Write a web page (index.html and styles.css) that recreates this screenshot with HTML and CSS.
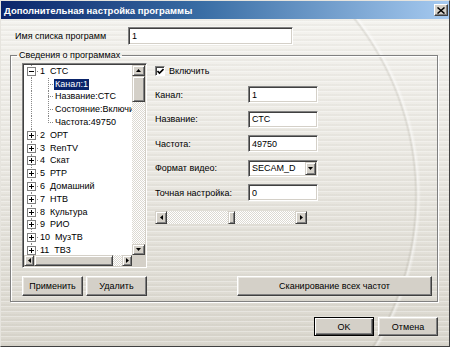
FILE: index.html
```html
<!DOCTYPE html>
<html lang="ru">
<head>
  <meta charset="UTF-8">
  <title>Дополнительная настройка программы</title>
  <link rel="stylesheet" href="styles.css">
</head>
<body>
  <div class="window">
    <div class="titlebar">
      <span class="title">Дополнительная настройка программы</span>
      <span class="close-btn">
        <svg width="8" height="7" viewBox="0 0 8 7"><path d="M0.5 0.5L7.5 6.5M7.5 0.5L0.5 6.5" stroke="#000" stroke-width="1.5"/></svg>
      </span>
    </div>

    <div class="content">
      <div class="name-row">
        <span class="name-label">Имя списка программ</span>
        <div class="field name-field">1</div>
      </div>

      <fieldset class="group">
        <legend>Сведения о программах</legend>
        <div class="group-body">

          <!-- channel tree -->
          <div class="tree">
            <div class="tree-rows">
              <div class="node"><span class="exp"><span class="box open"></span><span class="hline"></span></span><span class="txt">1  СТС</span></div>
              <div class="node"><span class="indent"></span><span class="conn"></span><span class="txt sel">Канал:1</span></div>
              <div class="node"><span class="indent"></span><span class="conn"></span><span class="txt">Название:СТС</span></div>
              <div class="node"><span class="indent"></span><span class="conn"></span><span class="txt">Состояние:Включить</span></div>
              <div class="node last"><span class="indent"></span><span class="conn"></span><span class="txt">Частота:49750</span></div>
              <div class="node"><span class="exp"><span class="box"></span><span class="hline"></span></span><span class="txt">2  ОРТ</span></div>
              <div class="node"><span class="exp"><span class="box"></span><span class="hline"></span></span><span class="txt">3  RenTV</span></div>
              <div class="node"><span class="exp"><span class="box"></span><span class="hline"></span></span><span class="txt">4  Скат</span></div>
              <div class="node"><span class="exp"><span class="box"></span><span class="hline"></span></span><span class="txt">5  РТР</span></div>
              <div class="node"><span class="exp"><span class="box"></span><span class="hline"></span></span><span class="txt">6  Домашний</span></div>
              <div class="node"><span class="exp"><span class="box"></span><span class="hline"></span></span><span class="txt">7  НТВ</span></div>
              <div class="node"><span class="exp"><span class="box"></span><span class="hline"></span></span><span class="txt">8  Культура</span></div>
              <div class="node"><span class="exp"><span class="box"></span><span class="hline"></span></span><span class="txt">9  РИО</span></div>
              <div class="node"><span class="exp"><span class="box"></span><span class="hline"></span></span><span class="txt">10  МузТВ</span></div>
              <div class="node"><span class="exp"><span class="box"></span><span class="hline"></span></span><span class="txt">11  ТВ3</span></div>
            </div>
            <div class="vscroll">
              <span class="sb-btn"><svg width="5" height="3" viewBox="0 0 5 3"><polygon points="0,3 2.5,0 5,3" fill="#000"/></svg></span>
              <span class="sb-btn v-thumb"></span>
              <span class="track"></span>
              <span class="sb-btn"><svg width="5" height="3" viewBox="0 0 5 3"><polygon points="0,0 2.5,3 5,0" fill="#000"/></svg></span>
            </div>
            <div class="hscroll">
              <span class="sb-btn"><svg width="3" height="5" viewBox="0 0 3 5"><polygon points="3,0 0,2.5 3,5" fill="#000"/></svg></span>
              <span class="sb-btn h-thumb"></span>
              <span class="track"></span>
              <span class="sb-btn"><svg width="3" height="5" viewBox="0 0 3 5"><polygon points="0,0 3,2.5 0,5" fill="#000"/></svg></span>
            </div>
            <div class="corner"></div>
          </div>

          <!-- channel settings -->
          <div class="form">
            <div class="check-row">
              <span class="checkbox"><svg width="7" height="7" viewBox="0 0 7 7"><polyline points="0.5,3 2.5,5 6.5,1" fill="none" stroke="#000" stroke-width="1.6"/></svg></span>
              <span>Включить</span>
            </div>
            <span class="lbl">Канал:</span><div class="field">1</div>
            <span class="lbl">Название:</span><div class="field">СТС</div>
            <span class="lbl">Частота:</span><div class="field">49750</div>
            <span class="lbl">Формат видео:</span>
            <div class="field combo">
              <span>SECAM_D</span>
              <span class="sb-btn combo-btn"><svg width="5" height="3" viewBox="0 0 5 3"><polygon points="0,0 2.5,3 5,0" fill="#000"/></svg></span>
            </div>
            <span class="lbl">Точная настройка:</span><div class="field">0</div>
            <div class="slider">
              <span class="sb-btn arrow"><svg width="3" height="5" viewBox="0 0 3 5"><polygon points="3,0 0,2.5 3,5" fill="#000"/></svg></span>
              <span class="track"></span>
              <span class="sb-btn s-thumb"></span>
              <span class="track"></span>
              <span class="sb-btn arrow"><svg width="3" height="5" viewBox="0 0 3 5"><polygon points="0,0 3,2.5 0,5" fill="#000"/></svg></span>
            </div>
          </div>

          <div class="left-buttons">
            <button class="btn">Применить</button>
            <button class="btn">Удалить</button>
          </div>
          <div class="right-buttons">
            <button class="btn scan-btn">Сканирование всех частот</button>
          </div>
        </div>
      </fieldset>

      <div class="footer">
        <button class="btn default-btn">OK</button>
        <button class="btn">Отмена</button>
      </div>
    </div>
  </div>
</body>
</html>
```

FILE: styles.css
```css
* {
  box-sizing: border-box;
}

body {
  margin: 0;
  font-family: "Liberation Sans", Arial, sans-serif;
  font-size: 9px;
  color: #000;
}

.window {
  width: 450px;
  height: 347px;
  display: flex;
  flex-direction: column;
  border: 1px solid;
  border-color: #e6e4de #404040 #404040 #e6e4de;
  background:
    radial-gradient(circle at 129px 195px, transparent 0 284px, rgba(140, 135, 120, 0.18) 286px, rgba(255, 255, 255, 0.5) 288px, transparent 291px),
    repeating-linear-gradient(180deg, rgba(255, 255, 255, 0.3) 0 1px, transparent 1px 3px, rgba(120, 115, 100, 0.05) 3px 5px),
    linear-gradient(180deg, #f5f4f0 0%, #ebe9e3 45%, #dad7ce 100%);
}

/* Title bar */
.titlebar {
  height: 18px;
  display: flex;
  align-items: center;
  justify-content: space-between;
  padding: 0 1px 0 3px;
  background: linear-gradient(90deg, #0a246a 0%, #3a6ea5 45%, #a6caf0 100%);
  color: #fff;
  font-weight: bold;
  font-size: 9.5px;
}

.close-btn {
  width: 14px;
  height: 12px;
  display: flex;
  align-items: center;
  justify-content: center;
  background: #d4d0c8;
  border: 1px solid;
  border-color: #fff #404040 #404040 #fff;
  box-shadow: inset -1px -1px #808080;
}

.content {
  flex: 1;
  padding: 8px 11px 0 9px;
}

/* Common controls */
.btn {
  font: inherit;
  color: #000;
  padding: 0;
  background: #d4d0c8;
  border: 1px solid;
  border-color: #fff #404040 #404040 #fff;
  box-shadow: inset -1px -1px #808080, inset 1px 1px #e8e6e0;
}

.default-btn {
  border-color: #000;
  box-shadow: inset 1px 1px #fff, inset -1px -1px #404040, inset -2px -2px #808080;
}

.field {
  height: 17px;
  display: flex;
  align-items: center;
  padding: 0 3px;
  background: #fff;
  border: 1px solid;
  border-color: #808080 #fff #fff #808080;
  box-shadow: inset 1px 1px #404040, inset -1px -1px #d4d0c8;
}

.sb-btn {
  flex: none;
  display: flex;
  align-items: center;
  justify-content: center;
  background: #d4d0c8;
  border: 1px solid;
  border-color: #d4d0c8 #404040 #404040 #d4d0c8;
  box-shadow: inset 1px 1px #fff, inset -1px -1px #808080;
}

.track {
  flex: 1;
  background: repeating-conic-gradient(#fff 0 25%, #dcd9d2 0 50%) 0 0 / 2px 2px;
}

/* Name row */
.name-row {
  display: flex;
  align-items: center;
  margin-left: 5px;
}

.name-label {
  width: 113px;
}

.name-field {
  width: 165px;
  height: 18px;
}

/* Group box */
.group {
  margin: 4px 0 0;
  padding: 2px 5px 5px 11px;
  border: 1px solid #808080;
  box-shadow: 1px 1px #fff, inset 1px 1px #fff;
}

.group legend {
  margin-left: -5px;
  padding: 0 2px;
  line-height: 12px;
}

.group-body {
  display: grid;
  grid-template-columns: 125px 1fr;
  grid-template-rows: 205px 20px;
  column-gap: 8px;
  row-gap: 8px;
}

/* Tree */
.tree {
  display: grid;
  grid-template-columns: 1fr 13px;
  grid-template-rows: 1fr 11px;
  background: #fff;
  border: 1px solid;
  border-color: #808080 #fff #fff #808080;
  box-shadow: inset 1px 1px #404040, inset -1px -1px #d4d0c8;
  padding: 1px;
}

.tree-rows {
  overflow: hidden;
}

.node {
  height: 12.8px;
  display: flex;
  align-items: center;
  white-space: pre;
}

.exp {
  width: 15px;
  flex: none;
  align-self: stretch;
  display: flex;
  align-items: center;
  padding-left: 3px;
  background: repeating-linear-gradient(#888 0 1px, transparent 1px 2px) 7px 0 / 1px 100% no-repeat;
}

.box {
  width: 9px;
  height: 9px;
  flex: none;
  border: 1px solid #808080;
  background:
    linear-gradient(#000, #000) center / 5px 1px no-repeat,
    linear-gradient(#000, #000) center / 1px 5px no-repeat,
    #fff;
}

.box.open {
  background: linear-gradient(#000, #000) center / 5px 1px no-repeat, #fff;
}

.hline {
  flex: 1;
  height: 1px;
  margin-left: 1px;
  background: repeating-linear-gradient(90deg, #888 0 1px, transparent 1px 2px);
}

.indent {
  width: 16px;
  flex: none;
  align-self: stretch;
  background: repeating-linear-gradient(#888 0 1px, transparent 1px 2px) 7px 0 / 1px 100% no-repeat;
}

.conn {
  width: 14px;
  flex: none;
  align-self: stretch;
  background:
    repeating-linear-gradient(#888 0 1px, transparent 1px 2px) 8px 0 / 1px 100% no-repeat,
    repeating-linear-gradient(90deg, #888 0 1px, transparent 1px 2px) 8px 50% / 6px 1px no-repeat;
}

.last .conn {
  background-size: 1px 50%, 6px 1px;
}

.txt {
  flex: none;
  padding: 0 1px;
  line-height: 11px;
}

.txt.sel {
  background: #0a246a;
  color: #fff;
}

.vscroll {
  display: flex;
  flex-direction: column;
}

.vscroll .sb-btn {
  height: 11px;
}

.vscroll .v-thumb {
  height: 26px;
}

.hscroll {
  display: flex;
}

.hscroll .sb-btn {
  width: 10px;
}

.hscroll .h-thumb {
  width: 79px;
}

.corner {
  background: #d4d0c8;
}

/* Settings form */
.form {
  display: grid;
  grid-template-columns: 93px 70px;
  align-content: start;
  align-items: center;
  row-gap: 7.5px;
  padding-top: 3px;
}

.check-row {
  grid-column: 1 / 3;
  display: flex;
  align-items: center;
  gap: 4px;
  height: 10px;
  margin-bottom: 2.5px;
}

.checkbox {
  width: 10px;
  height: 10px;
  display: flex;
  align-items: center;
  justify-content: center;
  background: #fff;
  border: 1px solid;
  border-color: #808080 #fff #fff #808080;
  box-shadow: inset 1px 1px #404040;
}

.combo {
  padding: 0 0 0 3px;
  justify-content: space-between;
}

.combo-btn {
  width: 11px;
  align-self: stretch;
  margin: 1px 1px 1px 0;
}

.slider {
  grid-column: 1 / 3;
  width: 152px;
  height: 13px;
  display: flex;
  margin-top: 2.5px;
}

.slider .arrow {
  width: 12px;
}

.slider .s-thumb {
  width: 7px;
}

/* Button rows */
.left-buttons {
  display: flex;
  gap: 3px;
}

.left-buttons .btn {
  flex: 1;
}

.right-buttons {
  display: flex;
  justify-content: flex-end;
}

.scan-btn {
  width: 195px;
}

.footer {
  display: flex;
  justify-content: flex-end;
  gap: 4px;
  margin-top: 15px;
}

.footer .btn {
  width: 60px;
  height: 19px;
}
```
